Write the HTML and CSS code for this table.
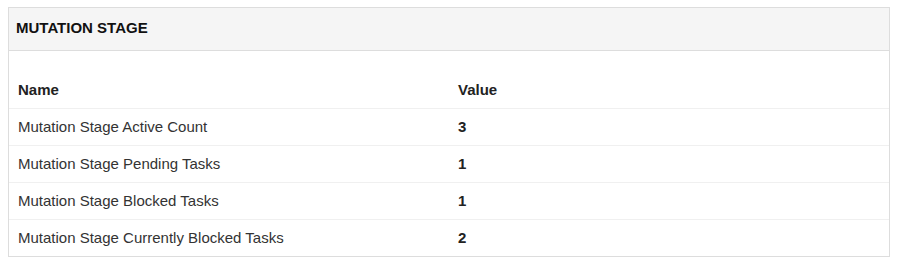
FILE: index.html
```html
<!DOCTYPE html>
<html>
<head>
<meta charset="utf-8">
<link rel="stylesheet" href="styles.css">
</head>
<body>
<div class="panel">
  <div class="panel-heading">MUTATION STAGE</div>
  <div class="panel-body">
    <table class="stats">
      <thead>
        <tr><th class="col-name">Name</th><th>Value</th></tr>
      </thead>
      <tbody>
        <tr><td>Mutation Stage Active Count</td><td class="val">3</td></tr>
        <tr><td>Mutation Stage Pending Tasks</td><td class="val">1</td></tr>
        <tr><td>Mutation Stage Blocked Tasks</td><td class="val">1</td></tr>
        <tr><td>Mutation Stage Currently Blocked Tasks</td><td class="val">2</td></tr>
      </tbody>
    </table>
  </div>
</div>
</body>
</html>
```
FILE: styles.css
```css
html, body {
  background: #fff;
}
body {
  margin: 7px 11px 0 8px;
  font-family: "Liberation Sans", Arial, sans-serif;
  font-size: 15px;
  line-height: 20px;
  color: #333;
}
.panel {
  border: 1px solid #ddd;
  background: #fff;
}
.panel-heading {
  background: #f5f5f5;
  border-bottom: 1px solid #ddd;
  padding: 10px 7px 12px 7px;
  font-weight: bold;
  color: #111;
}
.panel-body {
  padding-top: 21px;
}
.stats {
  width: 100%;
  border-collapse: collapse;
}
.stats th, .stats td {
  text-align: left;
  padding: 8px 8px 8px 9px;
  vertical-align: top;
}
.stats th {
  font-weight: bold;
  color: #222;
  border-bottom: 1px solid #f0f0f0;
}
.col-name {
  width: 50%;
}
.stats tbody tr + tr td {
  border-top: 1px solid #f0f0f0;
}
.val {
  font-weight: bold;
  color: #222;
}
```
